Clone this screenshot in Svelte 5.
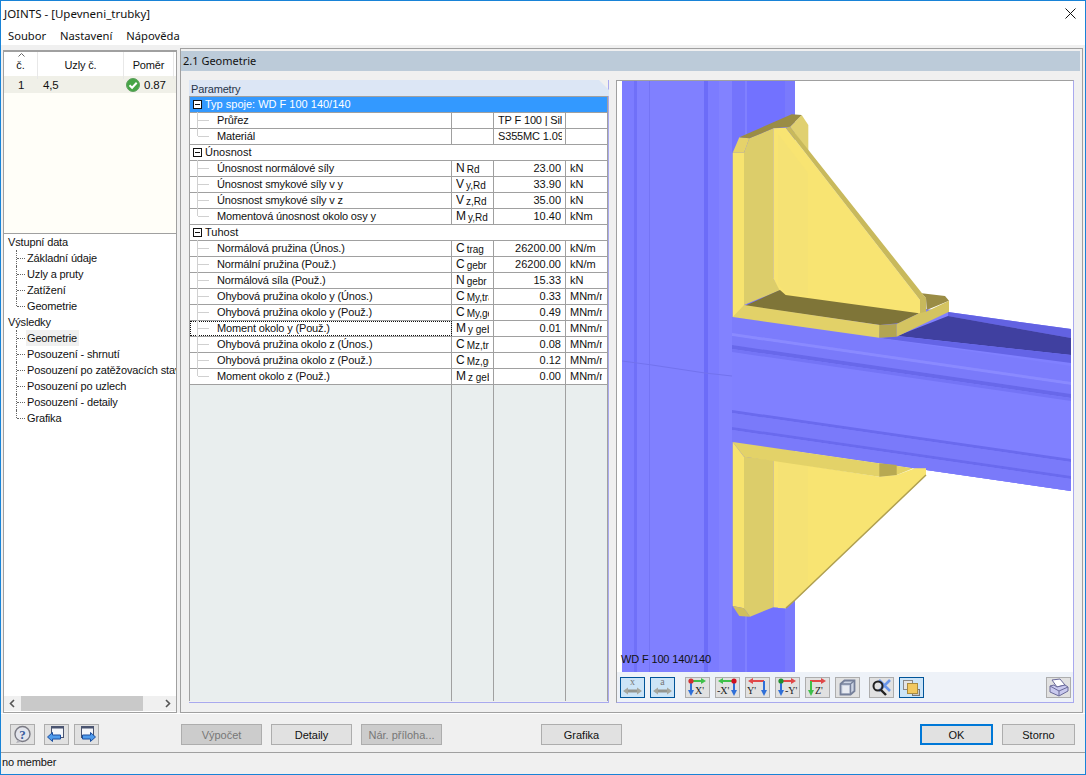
<script>
  const sections = [
    {
      title: 'Typ spoje: WD F 100 140/140',
      selected: true,
      rows: [
        { name: 'Průřez', val: 'TP F 100 | Silnice', text: true },
        { name: 'Materiál', val: 'S355MC 1.0976', text: true }
      ]
    },
    {
      title: 'Únosnost',
      rows: [
        { name: 'Únosnost normálové síly', sym: 'N', sub: 'Rd', val: '23.00', unit: 'kN' },
        { name: 'Únosnost smykové síly v y', sym: 'V', sub: 'y,Rd', val: '33.90', unit: 'kN' },
        { name: 'Únosnost smykové síly v z', sym: 'V', sub: 'z,Rd', val: '35.00', unit: 'kN' },
        { name: 'Momentová únosnost okolo osy y', sym: 'M', sub: 'y,Rd', val: '10.40', unit: 'kNm' }
      ]
    },
    {
      title: 'Tuhost',
      rows: [
        { name: 'Normálová pružina (Únos.)', sym: 'C', sub: 'trag', val: '26200.00', unit: 'kN/m' },
        { name: 'Normální pružina (Použ.)', sym: 'C', sub: 'gebr', val: '26200.00', unit: 'kN/m' },
        { name: 'Normálová síla (Použ.)', sym: 'N', sub: 'gebr', val: '15.33', unit: 'kN' },
        { name: 'Ohybová pružina okolo y (Únos.)', sym: 'C', sub: 'My,trag', val: '0.33', unit: 'MNm/rad' },
        { name: 'Ohybová pružina okolo y (Použ.)', sym: 'C', sub: 'My,gebr', val: '0.49', unit: 'MNm/rad' },
        { name: 'Moment okolo y (Použ.)', sym: 'M', sub: 'y gebr', val: '0.01', unit: 'MNm/rad', focus: true },
        { name: 'Ohybová pružina okolo z (Únos.)', sym: 'C', sub: 'Mz,trag', val: '0.08', unit: 'MNm/rad' },
        { name: 'Ohybová pružina okolo z (Použ.)', sym: 'C', sub: 'Mz,gebr', val: '0.12', unit: 'MNm/rad' },
        { name: 'Moment okolo z (Použ.)', sym: 'M', sub: 'z gebr', val: '0.00', unit: 'MNm/rad' }
      ]
    }
  ];

  const tree = [
    { title: 'Vstupní data', items: ['Základní údaje', 'Uzly a pruty', 'Zatížení', 'Geometrie'] },
    { title: 'Výsledky', items: ['Geometrie', 'Posouzení - shrnutí', 'Posouzení po zatěžovacích stavech', 'Posouzení po uzlech', 'Posouzení - detaily', 'Grafika'] }
  ];

  // column stripes, page x coordinates
  const stripes = [
    [622, 634, '#7c7cff'], [634, 637, '#7070f8'], [637, 649, '#8080ff'], [649, 650, '#7474f4'],
    [650, 704, '#8080ff'], [704, 708, '#6c6cf8'], [708, 719, '#7c7cff'], [719, 732, '#8282ff'],
    [732, 745, '#7474fc'], [745, 747, '#8080ff'], [747, 785, '#7272ff'], [785, 795, '#7a7afc']
  ];

  // beam bands: y at x=732, the far end at x=1071 is 49px lower
  const bands = [
    [317, 333, '#7c7cfc'], [333, 336, '#8a8aff'], [336, 345, '#7a7afa'], [345, 349, '#6868ea'], [349, 352, '#7474f6'],
    [410, 413, '#6a6aee'], [413, 427, '#7a7afa'], [427, 430, '#6a6aee'], [430, 442, '#7a7afa']
  ];
  const band = ([a, b]) => `732,${a} 1071,${a + 49} 1071,${b + 49} 732,${b}`;
</script>

{#snippet axis(h, v, dot, label, flip)}
  <svg width="23" height="19" viewBox="0 0 23 19">
    <path d={flip ? 'M18 3H5' : 'M4 3H17'} stroke={h} stroke-width="2" />
    <path d={flip ? 'M7 0L2 3l5 3z' : 'M15 0l5 3-5 3z'} fill={h} />
    <path d={flip ? 'M18 3V14' : 'M5 3V14'} stroke={v} stroke-width="2" />
    <path d={flip ? 'M15 12l3 6 3-6z' : 'M2 12l3 6 3-6z'} fill={v} />
    {#if dot}<circle cx={flip ? 18 : 5} cy="3" r="2.6" fill={dot} />{/if}
    <text x={flip ? 1 : 9} y="16" class="axis-label">{label}</text>
  </svg>
{/snippet}

{#snippet dim(label)}
  <svg width="23" height="19" viewBox="0 0 23 19">
    <text x="11.5" y="7" text-anchor="middle" class="dim-label">{label}</text>
    <path d="M5 13h13" stroke="#94958e" stroke-width="3" />
    <path d="M7 9.5L2 13l5 3.5zM16 9.5l5 3.5-5 3.5z" fill="#a5a69e" />
  </svg>
{/snippet}

{#snippet win(dir)}
  <svg width="23" height="19" viewBox="0 0 23 19">
    <rect x="6.5" y="1.5" width="12" height="11" fill="#f4f6fa" stroke="#4a5470" />
    <rect x="6" y="1" width="13" height="2.500" fill="#4a5470" />
    {#if dir === 'left'}
      <path d="M2.500 12l5-4.500V10h8v4h-8v2.500z" fill="#4f9bec" stroke="#1c4fa0" />
    {:else}
      <path d="M20.500 12l-5-4.500V10h-8v4h8v2.500z" fill="#4f9bec" stroke="#1c4fa0" />
    {/if}
  </svg>
{/snippet}

<div class="window">
  <div class="title">
    <span>JOINTS - [Upevneni_trubky]</span>
    <svg class="close" width="11" height="11" viewBox="0 0 11 11">
      <path d="M.5 .5l10 10M10.5 .5l-10 10" stroke="#111" fill="none" />
    </svg>
  </div>
  <div class="menu">
    <span>Soubor</span>
    <span>Nastavení</span>
    <span>Nápověda</span>
  </div>

  <div class="main">
    <div class="left">
      <div class="list">
        <div class="list-head">
          <div class="c1">
            <svg class="sort" width="7" height="4" viewBox="0 0 7 4"><path d="M.5 3.5l3-3 3 3" fill="none" stroke="#666" /></svg>
            č.
          </div>
          <div class="c2">Uzly č.</div>
          <div class="c3">Poměr</div>
        </div>
        <div class="list-row">
          <div class="r1">1</div>
          <div class="r2">4,5</div>
          <div class="r3">
            <svg width="14" height="14" viewBox="0 0 14 14">
              <circle cx="7" cy="7" r="6.5" fill="#46a546" stroke="#5f9f5f" />
              <path d="M3.5 7.2l2.6 2.6 4.6-5" fill="none" stroke="#fff" stroke-width="2" />
            </svg>
            0.87
          </div>
        </div>
      </div>

      <div class="tree">
        {#each tree as node}
          <div class="tree-title">{node.title}</div>
          {#each node.items as item, i}
            <div class="tree-item" class:last={i === node.items.length - 1}>
              <span class:current={node.title === 'Výsledky' && i === 0}>{item}</span>
            </div>
          {/each}
        {/each}
      </div>

      <div class="hscroll">
        <svg width="8" height="9" viewBox="0 0 8 9"><path d="M6 1L2.5 4.5 6 8" fill="none" stroke="#555" stroke-width="1.6" /></svg>
        <div class="thumb"></div>
        <svg width="8" height="9" viewBox="0 0 8 9"><path d="M2 1l3.500 3.500L2 8" fill="none" stroke="#555" stroke-width="1.6" /></svg>
      </div>
    </div>

    <div class="right">
      <div class="bar">2.1 Geometrie</div>
      <div class="body">
        <div class="params">
          <div class="params-head">Parametry</div>
          <div class="table">
            {#each sections as sec}
              <div class="group" class:selected={sec.selected}>
                <span class="box"></span>{sec.title}
              </div>
              {#each sec.rows as row, i}
                <div class="row">
                  <div class="name" class:focus={row.focus} class:last={i === sec.rows.length - 1}>{row.name}</div>
                  <div class="sym">
                    {#if row.sym}<div class="clip">{row.sym}<sub>{row.sub}</sub></div>{/if}
                  </div>
                  <div class="val" class:text={row.text}><div class="clip">{row.val}</div></div>
                  <div class="unit"><div class="clip">{row.unit ?? ''}</div></div>
                </div>
              {/each}
            {/each}
            <div class="row filler">
              <div></div>
              <div></div>
              <div></div>
              <div></div>
            </div>
          </div>
        </div>

        <div class="view">
          <div class="canvas">
            <svg width="450" height="591" viewBox="622 81 450 591">
              <!-- beam -->
              <polygon points="732,282 948,312 1071,329 1071,491 732,442" fill="#8080ff" />
              <polygon points="948,312 1071,329 1071,338 948,316" fill="#6262e2" />
              <polygon points="948,316 1071,338 1071,355 907,337 897,336" fill="#4040a0" />
              <polygon points="897,336 1071,355 1071,363 880,338" fill="#6464e6" />
              <!-- column -->
              {#each stripes as s}
                <rect x={s[0]} y="81" width={s[1] - s[0]} height="591" fill={s[2]} />
              {/each}
              <polygon points="732,317 1071,366 1071,491 732,442" fill="#8080ff" />
              {#each bands as b}
                <polygon points={band(b)} fill={b[2]} />
              {/each}
              <path d="M622 361l30 4 53 8 27 3" fill="none" stroke="#7272ee" />

              <!-- upper gusset -->
              <polygon points="790,126.700 801.700,115 808.300,125 808.300,151.700" fill="#e0d070" />
              <polygon points="921.700,293.300 945,296 949,300.700 926.700,310 926,298.300" fill="#9a8c45" />
              <polygon points="732.700,152.700 744,152.700 744,317 732.700,317" fill="#f7e36f" />
              <polygon points="732.700,152.700 739.300,137.300 749.300,138.300 744,152.700" fill="#e5d26a" />
              <polygon points="744,152.700 749.300,138.300 773.300,128.300 773.300,278.300 780.700,290 744,305" fill="#dccd6a" />
              <polygon points="739.300,137.300 791.700,114.300 801.700,115 790,126.700 773.300,128.300 749.300,138.300" fill="#9a8c45" />
              <polygon points="773.300,128.300 785.700,127.700 920,300 920,314 786,297 780,291 773.300,278.300" fill="#f8e472" />
              <polygon points="778,134 808,173 808,296 786,293 778,285" fill="#f5e274" />
              <polygon points="785.700,127.700 790,126.700 926,298.300 926,312 920,314 920,300" fill="#c8b95c" />
              <polygon points="745,305.700 780,290 785.700,295 919,313.300 898.300,323.300 880,325" fill="#7f7538" />
              <polygon points="732.700,317 744,305 880,325 879.300,337.700" fill="#e2d168" />
              <polygon points="879.300,325 896.700,324 896.700,336.700 879.300,337.700" fill="#b3a552" />
              <polygon points="896.700,324 919,313.300 926,311.700 949,300.700 949,311.700 896.700,336.700" fill="#d4c461" />

              <!-- lower gusset -->
              <polygon points="732.700,442 732.700,606 744,608.300 744,456.700" fill="#f7e36f" />
              <polygon points="773.300,460 879.300,476.700 896.700,475 915,468.300 926,468.300 926,475 795,600 785.700,608.300 773.300,607.300" fill="#f8e472" />
              <polygon points="778,461 808,466 808,588 795,600 785.700,608.300 778,608" fill="#f5e274" />
              <polygon points="744,456.700 773.300,460 773.300,607.300 750,616.700 744,608.300" fill="#dccd6a" />
              <polygon points="732.700,442 913.300,468.300 896.700,475 879.300,476.700 744,456.700" fill="#e3d268" />
              <polygon points="879.300,463.300 896.700,465 896.700,475 879.300,476.700" fill="#b8a952" />
              <polygon points="732.700,606 744,608.300 750,616.700 739.300,616" fill="#d0bf5e" />
              <path d="M926 475L795 600l-9 8" fill="none" stroke="#b0a050" stroke-width="1.500" />
            </svg>
            <span class="label">WD F 100 140/140</span>
          </div>
          <div class="tools">
            <div class="tool-group">
              <button class="tool on">{@render dim('x')}</button>
              <button class="tool on">{@render dim('a')}</button>
            </div>
            <div class="tool-group">
              <button class="tool">{@render axis('#3fc04a', '#2f6fd8', '#d03030', "X'", false)}</button>
              <button class="tool">{@render axis('#3fc04a', '#2f6fd8', '#d01020', "-X'", true)}</button>
              <button class="tool">{@render axis('#e04848', '#2f6fd8', null, "Y'", true)}</button>
              <button class="tool">{@render axis('#e04848', '#2f6fd8', '#1f8f2f', "-Y'", false)}</button>
              <button class="tool">{@render axis('#e04848', '#3fc04a', null, "Z'", false)}</button>
              <button class="tool">
                <svg width="23" height="19" viewBox="0 0 23 19">
                  <path d="M4.500 6l4-3.500h10v10.500l-4 3.500h-10z" fill="#cdd4e4" stroke="#76809a" stroke-width="1.800" />
                  <path d="M4.500 6h10v11M14.500 6l4-3.500" fill="none" stroke="#76809a" stroke-width="1.400" />
                  <rect x="6.500" y="8" width="6.500" height="7" fill="#e8ebf2" />
                </svg>
              </button>
            </div>
            <div class="tool-group second">
              <button class="tool">
                <svg width="23" height="19" viewBox="0 0 23 19">
                  <path d="M9 2l11 11M20 2L9 13" stroke="#6a96ea" stroke-width="2.600" />
                  <circle cx="8" cy="8" r="4.500" fill="none" stroke="#222" stroke-width="2" />
                  <path d="M11 12l5 5" stroke="#222" stroke-width="2.400" />
                </svg>
              </button>
              <button class="tool on">
                <svg width="23" height="19" viewBox="0 0 23 19">
                  <rect x="3.500" y="2.500" width="9" height="9" fill="#e4e4e4" stroke="#888" />
                  <rect x="12.500" y="11.500" width="7" height="6" fill="#c8c8c8" stroke="#777" />
                  <rect x="7.500" y="5.500" width="10" height="10" fill="#f2c860" stroke="#a88a40" />
                </svg>
              </button>
            </div>
            <button class="tool print">
              <svg width="23" height="19" viewBox="0 0 23 19">
                <path d="M5 2l8-1 5 6-8 2z" fill="#fff" stroke="#6a6a9a" />
                <path d="M3 8l4-1 3 2 8-2 3 2v4l-9 5-9-4z" fill="#c9c9ee" stroke="#6a6a9a" />
                <path d="M3 8l9 5 9-4M12 13v5" fill="none" stroke="#6a6a9a" />
              </svg>
            </button>
          </div>
        </div>
      </div>
    </div>
  </div>

  <div class="footer">
    <button class="tool help">
      <svg width="23" height="19" viewBox="0 0 23 19">
        <circle cx="11.500" cy="9" r="7.500" fill="#e2e4ec" stroke="#7a7a84" stroke-width="1.400" />
        <path d="M7 15l-2 3 5-1z" fill="#b0b0b8" />
        <text x="11.500" y="13.500" text-anchor="middle" class="help-mark">?</text>
      </svg>
    </button>
    <button class="tool nav-first">{@render win('left')}</button>
    <button class="tool nav">{@render win('right')}</button>
    <button class="btn wide calc" disabled>Výpočet</button>
    <button class="btn wide">Detaily</button>
    <button class="btn wide" disabled>Nár. příloha...</button>
    <button class="btn wide graph">Grafika</button>
    <button class="btn ok">OK</button>
    <button class="btn cancel">Storno</button>
  </div>
  <div class="status">no member</div>
</div>

<style>
  :global(body) {
    margin: 0;
    overflow: hidden;
  }
  .window {
    width: 1086px;
    height: 775px;
    box-sizing: border-box;
    border: 1px solid #1883d7;
    display: flex;
    flex-direction: column;
    background: #f0f0f0;
    font-family: "Liberation Sans", sans-serif;
    font-size: 11px;
    letter-spacing: -0.15px;
    color: #111;
  }
  .title {
    height: 24px;
    flex: none;
    display: flex;
    align-items: center;
    justify-content: space-between;
    padding: 0 9px 0 3px;
    background: #fff;
    font-family: "Noto Sans", sans-serif;
    font-size: 11.500px;
    letter-spacing: 0;
  }
  .menu {
    height: 20px;
    flex: none;
    display: flex;
    align-items: center;
    gap: 14px;
    padding-left: 7px;
    background: #fff;
    font-family: "Noto Sans", sans-serif;
    font-size: 11.200px;
    letter-spacing: 0;
  }
  .main {
    height: 668px;
    flex: none;
    display: flex;
    align-items: flex-end;
    padding-left: 2px;
    box-sizing: border-box;
  }

  .left {
    width: 174px;
    height: 663px;
    box-sizing: border-box;
    border: 1px solid #a0a0a0;
    border-top-width: 2px;
    background: #fff;
    display: flex;
    flex-direction: column;
  }
  .list {
    height: 181px;
    flex: none;
    background: #fffef8;
    border-bottom: 1px solid #a0a0a0;
  }
  .list-head {
    height: 24px;
    display: grid;
    grid-template-columns: 34px 86px 50px;
    background: #fff;
    text-align: center;
  }
  .list-head > div {
    position: relative;
    border-right: 1px solid #e8e8e8;
    line-height: 27px;
  }
  .sort {
    position: absolute;
    left: 14px;
    top: 1px;
  }
  .list-row {
    height: 17px;
    display: grid;
    grid-template-columns: 34px 86px 50px;
    align-items: center;
    background: #f0f0e8;
    font-size: 11.500px;
  }
  .r1 {
    text-align: center;
  }
  .r2 {
    padding-left: 5px;
  }
  .r3 {
    display: flex;
    align-items: center;
    gap: 4px;
    padding-left: 2px;
  }
  .tree {
    flex: 1;
    overflow: hidden;
    white-space: nowrap;
  }
  .tree-title {
    height: 16px;
    line-height: 16px;
    padding-left: 4px;
  }
  .tree-item {
    position: relative;
    height: 16px;
    line-height: 16px;
    padding-left: 22px;
  }
  .tree-item::before {
    content: "";
    position: absolute;
    left: 12px;
    top: 0;
    height: 100%;
    border-left: 1px dotted #666;
  }
  .tree-item.last::before {
    height: 8px;
  }
  .tree-item::after {
    content: "";
    position: absolute;
    left: 13px;
    top: 8px;
    width: 8px;
    border-top: 1px dotted #666;
  }
  .tree-item span {
    display: inline-block;
    padding: 0 2px 0 1px;
  }
  .tree-item .current {
    background: #f0f0f0;
  }
  .hscroll {
    height: 15px;
    margin: 0 0 1px;
    flex: none;
    display: flex;
    align-items: center;
    background: #f0f0f0;
    padding: 0 3px 0 4px;
  }
  .thumb {
    width: 122px;
    height: 15px;
    margin: 0 21px 0 5px;
    background: #c9c9c9;
  }

  .right {
    width: 903px;
    height: 665px;
    margin-left: 3px;
    box-sizing: border-box;
    border: 1px solid #a0a0a0;
    padding: 2px 2px 0 0;
  }
  .bar {
    height: 20px;
    line-height: 20px;
    padding-left: 2px;
    background: #bccbd9;
    font-family: "Noto Sans", sans-serif;
    font-size: 11px;
    letter-spacing: 0;
  }
  .body {
    display: flex;
    gap: 7px;
    margin: 9px 0 0 8px;
  }
  .params {
    width: 420px;
    height: 623px;
    box-sizing: border-box;
    display: flex;
    flex-direction: column;
    border-right: 1px solid #a9a9ee;
    border-bottom: 1px solid #a9a9ee;
  }
  .params-head {
    height: 16px;
    flex: none;
    margin-right: -1px;
    padding: 2px 0 0 2px;
    box-sizing: border-box;
    line-height: 15px;
    background: #dce6f5;
    color: #26344a;
    clip-path: polygon(0 0, calc(100% - 10px) 0, 100% 10px, 100% 100%, 0 100%);
  }
  .table {
    flex: 1;
    display: flex;
    flex-direction: column;
    border-top: 1px solid #a0a0a0;
    border-left: 1px solid #a0a0a0;
    margin-bottom: 1px;
    background: #fff;
  }
  .group {
    height: 16px;
    flex: none;
    box-sizing: border-box;
    border-bottom: 1px solid #a0a0a0;
    border-right: 1px solid #a0a0a0;
    display: flex;
    align-items: center;
    line-height: 15px;
    letter-spacing: 0;
  }
  .group.selected {
    background: #3399ff;
    color: #fff;
  }
  .box {
    position: relative;
    width: 9px;
    height: 9px;
    margin: 0 3px 0 3px;
    box-sizing: border-box;
    border: 1px solid #111;
    background: #fff;
  }
  .box::after {
    content: "";
    position: absolute;
    left: 1px;
    right: 1px;
    top: 3px;
    border-top: 1px solid #111;
  }
  .row {
    height: 16px;
    flex: none;
    box-sizing: border-box;
    display: grid;
    grid-template-columns: 262px 42px 72px 42px;
    border-bottom: 1px solid #a0a0a0;
    line-height: 15px;
  }
  .row > div {
    box-sizing: border-box;
    border-right: 1px solid #a0a0a0;
  }
  .name {
    position: relative;
    padding-left: 27px;
  }
  .name::before {
    content: "";
    position: absolute;
    left: 7px;
    top: -1px;
    height: 16px;
    border-left: 1px solid #d0d0d0;
  }
  .name.last::before {
    height: 8px;
  }
  .name::after {
    content: "";
    position: absolute;
    left: 8px;
    top: 7px;
    width: 11px;
    border-top: 1px solid #d0d0d0;
  }
  .row > .name.focus {
    outline: 1px dotted #111;
    outline-offset: -1px;
  }
  .clip {
    overflow: hidden;
    white-space: nowrap;
  }
  .sym {
    padding-left: 4px;
    font-size: 12px;
    letter-spacing: 0;
  }
  .sym .clip {
    width: 33px;
  }
  sub {
    font-size: 10px;
    line-height: 0;
    vertical-align: -1px;
    margin-left: 2px;
  }
  .val {
    padding: 0 4px 0 4px;
    text-align: right;
    letter-spacing: 0;
  }
  .val.text {
    padding-right: 3px;
    text-align: left;
    letter-spacing: -0.15px;
  }
  .unit {
    padding-left: 4px;
    letter-spacing: 0;
  }
  .unit .clip {
    width: 32px;
  }
  .row.filler {
    flex: 1;
    background: #e9eeee;
    border-bottom: 0;
  }

  .view {
    width: 458px;
    height: 623px;
    box-sizing: border-box;
    flex: none;
    border-top: 1px solid #a0a0a0;
    border-right: 1px solid #a9a9ee;
    border-bottom: 1px solid #a9a9ee;
    border-left: 1px solid #a0a0a0;
    background: #fff;
  }
  .canvas {
    position: relative;
    height: 591px;
    padding-left: 5px;
  }
  .canvas svg {
    display: block;
  }
  .label {
    position: absolute;
    left: 4px;
    bottom: 6px;
    font-size: 11px;
    line-height: 13px;
    color: #111;
  }
  .tools {
    height: 30px;
    box-sizing: border-box;
    display: flex;
    align-items: flex-start;
    padding: 5px 0 0 3px;
    background: #eef2f8;
  }
  .tool-group {
    display: flex;
    gap: 5px;
    margin-right: 10px;
  }
  .tool-group.second {
    margin-left: -1px;
  }
  .tool {
    width: 25px;
    height: 21px;
    padding: 0;
    box-sizing: border-box;
    border: 1px solid #adadad;
    background: #e1e1e1;
    display: flex;
    align-items: center;
    justify-content: center;
    flex: none;
  }
  .tool.on {
    border-color: #005499;
    background: #cce4f7;
  }
  .print {
    margin-left: auto;
    margin-right: 2px;
  }
  .axis-label {
    font-family: "Liberation Serif", serif;
    font-size: 10px;
    letter-spacing: 0;
    fill: #222;
  }
  .dim-label {
    font-family: "Liberation Serif", serif;
    font-size: 10px;
    fill: #777;
  }
  .help-mark {
    font-family: "Liberation Serif", serif;
    font-size: 13px;
    font-weight: bold;
    fill: #3a5c9e;
  }

  .footer {
    height: 39px;
    flex: none;
    box-sizing: border-box;
    display: flex;
    align-items: flex-start;
    padding: 10px 10px 0 9px;
    border-top: 1px solid #fff;
  }
  .nav-first {
    margin-left: 9px;
  }
  .nav {
    margin-left: 5px;
  }
  .btn {
    height: 21px;
    padding: 0;
    box-sizing: border-box;
    border: 1px solid #adadad;
    background: #e1e1e1;
    font-family: "Liberation Sans", sans-serif;
    font-size: 11px;
    color: #111;
    flex: none;
  }
  .btn:disabled {
    background: #cccccc;
    color: #777;
  }
  .wide {
    width: 81px;
    margin-left: 9px;
  }
  .calc {
    margin-left: 82px;
  }
  .graph {
    margin-left: 99px;
  }
  .ok {
    width: 73px;
    margin-left: auto;
    border: 2px solid #0078d7;
  }
  .cancel {
    width: 73px;
    margin-left: 9px;
  }
  .status {
    flex: 1;
    box-sizing: border-box;
    border-top: 1px solid #a0a0a0;
    padding-left: 1px;
    line-height: 19px;
  }
</style>
